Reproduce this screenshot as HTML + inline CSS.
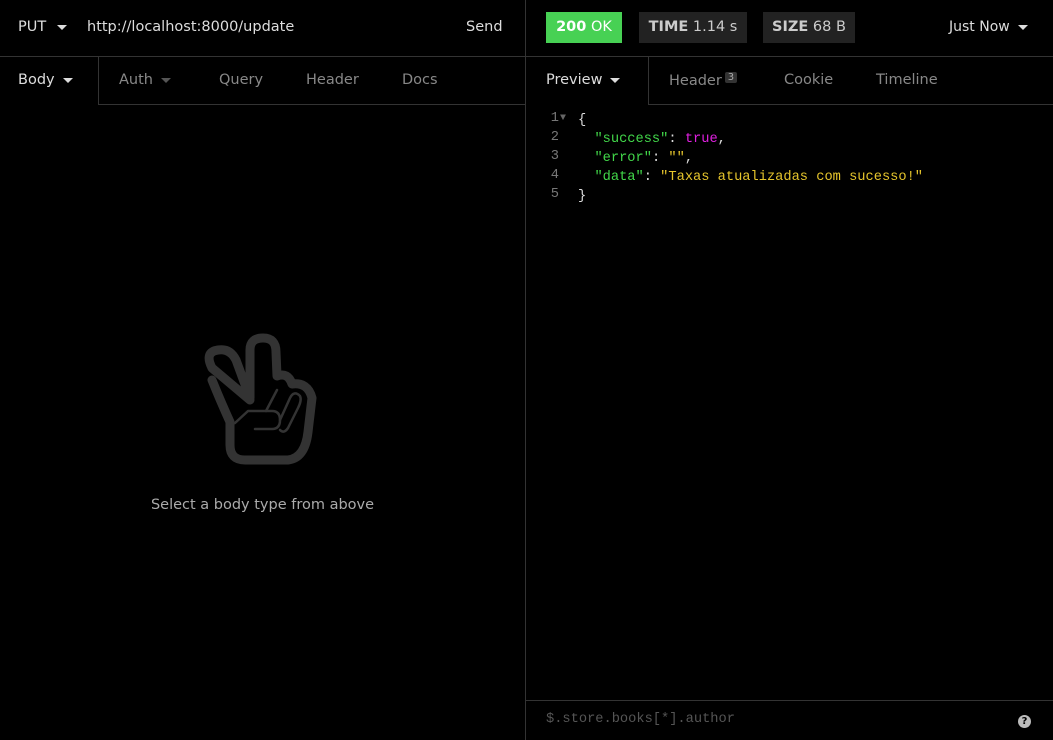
<!DOCTYPE html>
<html><head><style>
*{margin:0;padding:0;box-sizing:border-box}
body{width:1053px;height:740px;background:#000;font-family:"DejaVu Sans","Liberation Sans",sans-serif;color:#ddd;position:relative;overflow:hidden;font-size:14.5px}
.a{position:absolute;white-space:nowrap}
.tri{display:inline-block;width:0;height:0;border-left:5px solid transparent;border-right:5px solid transparent;border-top:5px solid currentColor;vertical-align:middle;margin-left:8px}
.tab{color:#888}
.mono{font-family:"Liberation Mono",monospace;font-size:13.7px}
.ln{position:absolute;left:530px;width:29px;text-align:right;color:#777}
</style></head><body>
<div class="a" style="left:525px;top:0;width:1px;height:740px;background:#333"></div>
<div class="a" style="left:0;top:56px;width:1053px;height:1px;background:#333"></div>
<div class="a" style="left:98px;top:104px;width:427px;height:1px;background:#333"></div>
<div class="a" style="left:98px;top:57px;width:1px;height:48px;background:#333"></div>
<div class="a" style="left:648px;top:104px;width:405px;height:1px;background:#333"></div>
<div class="a" style="left:648px;top:57px;width:1px;height:48px;background:#333"></div>
<div class="a" style="left:526px;top:700px;width:527px;height:1px;background:#333"></div>

<div class="a" style="left:18px;top:19px;color:#ddd">PUT<span class="tri" style="margin-left:11px"></span></div>
<div class="a" style="left:87px;top:19px;color:#ddd">http://localhost:8000/update</div>
<div class="a" style="left:466px;top:19px;color:#ddd">Send</div>

<div class="a" style="left:18px;top:72px;color:#ddd">Body<span class="tri"></span></div>
<div class="a tab" style="left:119px;top:72px">Auth<span class="tri" style="color:#555"></span></div>
<div class="a tab" style="left:219px;top:72px">Query</div>
<div class="a tab" style="left:306px;top:72px">Header</div>
<div class="a tab" style="left:402px;top:72px">Docs</div>

<div class="a" style="left:546px;top:12px;width:76px;height:31px;background:#47d154;color:#fff;text-align:center;line-height:31px"><b>200</b> OK</div>
<div class="a" style="left:639px;top:12px;width:108px;height:31px;background:#222;color:#ccc;text-align:center;line-height:31px"><b>TIME</b> 1.14 s</div>
<div class="a" style="left:763px;top:12px;width:92px;height:31px;background:#222;color:#ccc;text-align:center;line-height:31px"><b>SIZE</b> 68 B</div>
<div class="a" style="left:949px;top:19px;color:#ddd;font-size:14px">Just Now<span class="tri"></span></div>

<div class="a" style="left:546px;top:72px;color:#ddd">Preview<span class="tri"></span></div>
<div class="a tab" style="left:669px;top:72px">Header<span style="display:inline-block;background:#333;color:#aaa;font-size:10px;padding:0 3px;margin-left:3px;vertical-align:5px;border-radius:2px">3</span></div>
<div class="a tab" style="left:784px;top:72px">Cookie</div>
<div class="a tab" style="left:876px;top:72px">Timeline</div>

<div class="mono">
<div class="ln" style="top:111px">1</div><div class="a" style="left:560px;top:113px;font-size:10px;color:#666">▼</div>
<div class="ln" style="top:130px">2</div>
<div class="ln" style="top:149px">3</div>
<div class="ln" style="top:168px">4</div>
<div class="ln" style="top:187px">5</div>
<div class="a" style="left:578px;top:111px;line-height:19px;color:#ddd;white-space:pre">{
  <span style="color:#42d84a">"success"</span>: <span style="color:#e020e0">true</span>,
  <span style="color:#42d84a">"error"</span>: <span style="color:#e6c52c">""</span>,
  <span style="color:#42d84a">"data"</span>: <span style="color:#e6c52c">"Taxas atualizadas com sucesso!"</span>
}</div>
</div>

<svg class="a" style="left:190px;top:320px" width="150" height="160" viewBox="0 0 150 160">
<g fill="none" stroke="#333" stroke-linecap="round" stroke-linejoin="round">
<path stroke-width="9" d="M60 80 L22 48 Q14 32 28 30 Q40 28 46 40 L60 78 L60 30 Q60 18 73 18 Q86 18 86 32 L87 56 Q98 52 102 64 Q118 62 122 78 L118 112 Q115 138 98 140 L55 140 Q40 140 40 125 L40 102 Q30 80 22 60"/>
<path stroke-width="2.5" d="M45 103 L58 91 L82 91 Q90 91 90 100 Q90 109 82 109 L65 109"/>
<path stroke-width="2.5" d="M76 91 L87 70 M90 100 L100 78 Q104 70 110 76 Q112 80 108 88 L98 108 Q94 114 90 110"/>
</g></svg>
<div class="a" style="left:0;width:525px;top:497px;text-align:center;color:#aaa;font-size:14.5px">Select a body type from above</div>

<div class="a mono" style="left:546px;top:712px;color:#555">$.store.books[*].author</div>
<div class="a" style="left:1018px;top:715px;width:13px;height:13px;border-radius:50%;background:#bbb;color:#000;font-size:10px;font-weight:bold;text-align:center;line-height:13px">?</div>
</body></html>
